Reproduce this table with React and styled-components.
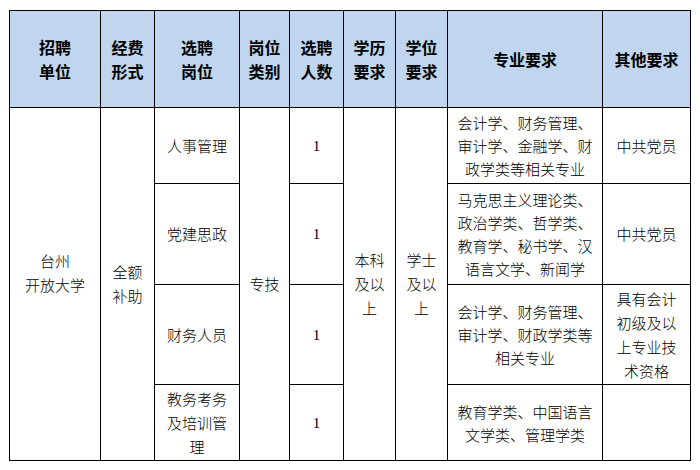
import React from "react";
import styled, { createGlobalStyle } from "styled-components";

const GlobalStyle = createGlobalStyle`
  html, body {
    margin: 0;
    padding: 0;
    background: #ffffff;
  }
  body {
    font-family: "Noto Sans CJK SC", "Noto Sans", sans-serif;
    color: #000;
  }
`;

const Page = styled.div`
  padding: 10px 0 0 9px;
`;

const Table = styled.table`
  border-collapse: collapse;
  table-layout: fixed;
  width: 682px;
`;

const HeadRow = styled.tr`
  height: 97px;
  background: #bfd6ee;
`;

const BodyRow = styled.tr`
  height: ${(p) => p.$h}px;
`;

const HeadCell = styled.th`
  border: 1px solid #000;
  padding: 0;
  font-size: 16px;
  font-weight: 700;
  line-height: 24px;
  text-align: center;
  vertical-align: middle;
`;

const Cell = styled.td`
  border: 1px solid #000;
  padding: 0 0 ${(p) => p.$lift || 0}px;
  font-size: 15px;
  font-weight: 300;
  line-height: 24px;
  text-align: center;
  vertical-align: middle;
  white-space: nowrap;
`;

const Num = styled(Cell)`
  font-family: "Liberation Serif", serif;
  font-size: 15px;
`;

const Major = styled(Cell)`
  line-height: 23px;
`;

const cols = [91, 54, 85, 50, 54, 52, 52, 155, 88];

const heads = [
  ["招聘", "单位"],
  ["经费", "形式"],
  ["选聘", "岗位"],
  ["岗位", "类别"],
  ["选聘", "人数"],
  ["学历", "要求"],
  ["学位", "要求"],
  ["专业要求"],
  ["其他要求"],
];

const posts = [
  {
    h: 76,
    name: ["人事管理"],
    major: ["会计学、财务管理、", "审计学、金融学、财", "政学类等相关专业"],
    other: ["中共党员"],
  },
  {
    h: 101,
    name: ["党建思政"],
    major: ["马克思主义理论类、", "政治学类、哲学类、", "教育学、秘书学、汉", "语言文学、新闻学"],
    other: ["中共党员"],
  },
  {
    h: 100,
    name: ["财务人员"],
    major: ["会计学、财务管理、", "审计学、财政学类等", "相关专业"],
    other: ["具有会计", "初级及以", "上专业技", "术资格"],
  },
  {
    h: 76,
    name: ["教务考务", "及培训管", "理"],
    major: ["教育学类、中国语言", "文学类、管理学类"],
    other: [],
  },
];

const Lines = ({ items }) =>
  items.map((t, i) => (
    <React.Fragment key={i}>
      {i > 0 && <br />}
      {t}
    </React.Fragment>
  ));

const App = () => {
  return (
    <Page>
      <GlobalStyle />
      <Table>
        <colgroup>
          {cols.map((w, i) => (
            <col key={i} style={{ width: w }} />
          ))}
        </colgroup>
        <thead>
          <HeadRow>
            {heads.map((h, i) => (
              <HeadCell key={i}>
                <Lines items={h} />
              </HeadCell>
            ))}
          </HeadRow>
        </thead>
        <tbody>
          {posts.map((p, i) => (
            <BodyRow key={i} $h={p.h}>
              {i === 0 && (
                <>
                  <Cell rowSpan={4} $lift={22}>
                    台州
                    <br />
                    开放大学
                  </Cell>
                  <Cell rowSpan={4}>
                    全额
                    <br />
                    补助
                  </Cell>
                </>
              )}
              <Cell>
                <Lines items={p.name} />
              </Cell>
              {i === 0 && <Cell rowSpan={4}>专技</Cell>}
              <Num>1</Num>
              {i === 0 && (
                <>
                  <Cell rowSpan={4}>
                    本科
                    <br />
                    及以
                    <br />
                    上
                  </Cell>
                  <Cell rowSpan={4}>
                    学士
                    <br />
                    及以
                    <br />
                    上
                  </Cell>
                </>
              )}
              <Major>
                <Lines items={p.major} />
              </Major>
              <Cell>
                <Lines items={p.other} />
              </Cell>
            </BodyRow>
          ))}
        </tbody>
      </Table>
    </Page>
  );
};

export default App;
